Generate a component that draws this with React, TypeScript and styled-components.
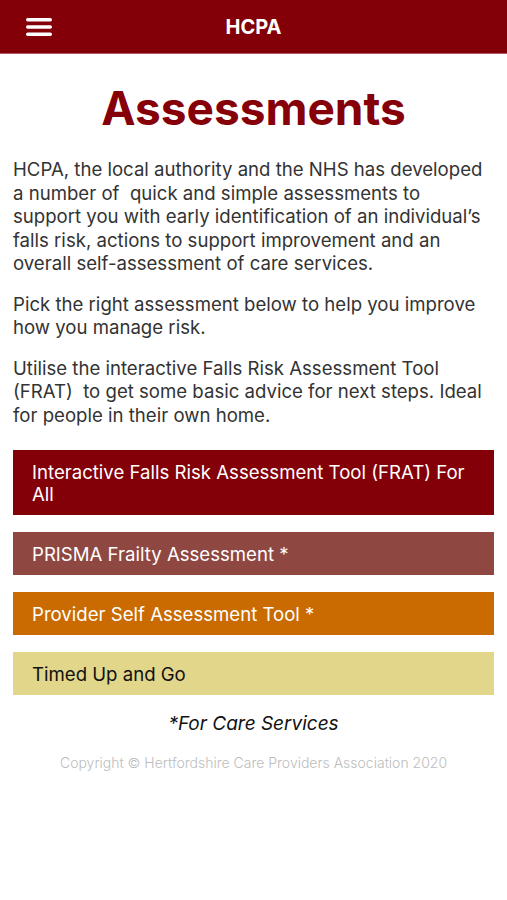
import React from "react";
import styled, { createGlobalStyle } from "styled-components";

const Global = createGlobalStyle`
  html, body { margin: 0; padding: 0; background: #ffffff; }
  body { font-family: Inter, "Liberation Sans", Arial, sans-serif; }
`;

const Page = styled.div`
  width: 507px;
  min-height: 900px;
  background: #fff;
  display: flex;
  flex-direction: column;
`;

const Header = styled.header`
  height: 54px;
  background: #830008;
  border-bottom: 1px solid #b35a5e;
  box-sizing: border-box;
  display: grid;
  grid-template-columns: 80px 1fr 80px;
  align-items: center;
`;

const MenuButton = styled.div`
  padding-left: 26px;
  display: flex;
  align-items: center;
`;

const HeaderTitle = styled.h1`
  margin: 0;
  text-align: center;
  color: #fff;
  font-size: 20px;
  font-weight: 700;
`;

const Content = styled.main`
  padding: 0 13px;
  display: flex;
  flex-direction: column;
`;

const Title = styled.h2`
  margin: 26px 0 22px;
  text-align: center;
  color: #850009;
  font-size: 46px;
  font-weight: 700;
  line-height: 56px;
`;

const Para = styled.p`
  margin: 0 7px 17px 0;
  color: #333;
  font-size: 18.6px;
  line-height: 23.5px;
`;

const ButtonList = styled.div`
  display: flex;
  flex-direction: column;
  gap: 17px;
  margin-top: 6px;
`;

const AssessButton = styled.button<{ $bg: string; $fg: string }>`
  all: unset;
  box-sizing: border-box;
  background: ${(p) => p.$bg};
  color: ${(p) => p.$fg};
  padding: 10.5px 19px;
  min-height: 43px;
  font-family: Inter, "Liberation Sans", Arial, sans-serif;
  font-size: 18.6px;
  line-height: 22px;
  cursor: pointer;
`;

const Note = styled.div`
  margin-top: 17px;
  text-align: center;
  font-style: italic;
  font-size: 19px;
  color: #111;
`;

const Copyright = styled.div`
  margin-top: 19px;
  text-align: center;
  font-size: 14px;
  font-weight: 300;
  color: #bdbdbd;
`;

const buttons = [
  { label: "Interactive Falls Risk Assessment Tool (FRAT) For All", bg: "#830008", fg: "#fff" },
  { label: "PRISMA Frailty Assessment *", bg: "#8f4742", fg: "#fff" },
  { label: "Provider Self Assessment Tool *", bg: "#c96b00", fg: "#fff" },
  { label: "Timed Up and Go", bg: "#e2d68b", fg: "#111" },
];

export default function App() {
  return (
    <Page>
      <Global />
      <Header>
        <MenuButton>
          <svg width="26" height="20" viewBox="0 0 26 20">
            <rect x="0" y="1" width="26" height="3.4" rx="1.7" fill="#fff" />
            <rect x="0" y="8.3" width="26" height="3.4" rx="1.7" fill="#fff" />
            <rect x="0" y="15.6" width="26" height="3.4" rx="1.7" fill="#fff" />
          </svg>
        </MenuButton>
        <HeaderTitle>HCPA</HeaderTitle>
        <div />
      </Header>
      <Content>
        <Title>Assessments</Title>
        <Para>
          HCPA, the local authority and the NHS has developed a number of&nbsp; quick and simple
          assessments to support you with early identification of an individual’s falls risk,
          actions to support improvement and an overall self-assessment of care services.
        </Para>
        <Para>Pick the right assessment below to help you improve how you manage risk.</Para>
        <Para>
          Utilise the interactive Falls Risk Assessment Tool (FRAT)&nbsp; to get some basic advice
          for next steps. Ideal for people in their own home.
        </Para>
        <ButtonList>
          {buttons.map((b) => (
            <AssessButton key={b.label} $bg={b.bg} $fg={b.fg}>
              {b.label}
            </AssessButton>
          ))}
        </ButtonList>
        <Note>*For Care Services</Note>
        <Copyright>Copyright © Hertfordshire Care Providers Association 2020</Copyright>
      </Content>
    </Page>
  );
}
